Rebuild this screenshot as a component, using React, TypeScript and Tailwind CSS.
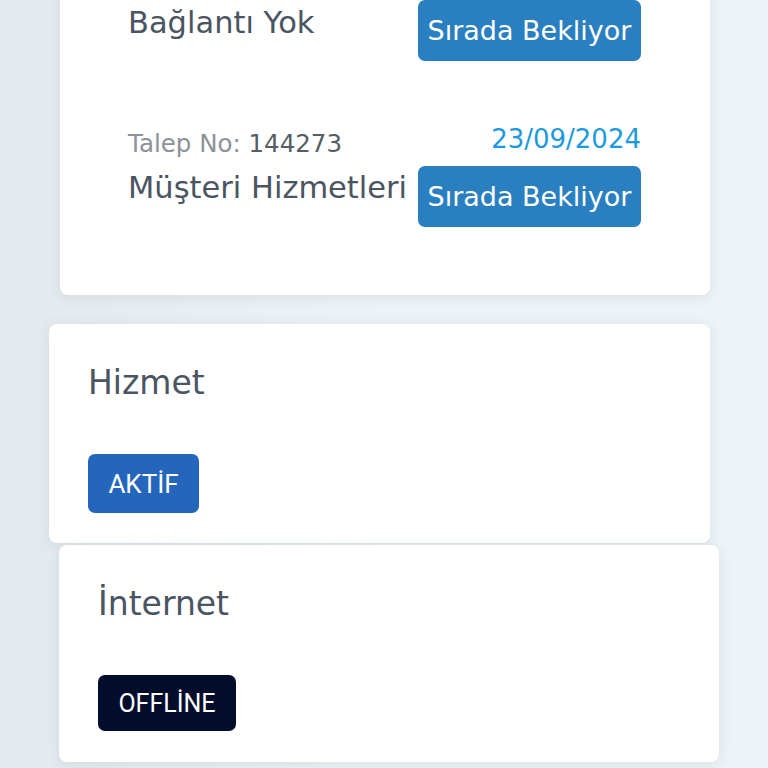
import React from "react";

const font = { fontFamily: '"DejaVu Sans", "Noto Sans", sans-serif' };
const roboto = { fontFamily: 'Roboto, "Noto Sans", sans-serif' };

function QueueButton() {
  return (
    <div className="flex h-[61px] w-[223px] shrink-0 items-center justify-center rounded-[7px] bg-[#2a7fc1] text-[27px] leading-none text-white">
      Sırada Bekliyor
    </div>
  );
}

export default function App() {
  return (
    <div
      className="relative h-[768px] w-[768px] overflow-hidden bg-gradient-to-r from-[#e3e9ed] via-[#edf3f6] to-[#edf3f6]"
      style={font}
    >
      <div className="flex flex-col">
        {/* Card 1 */}
        <div className="ml-[60px] -mt-[40px] w-[650px] rounded-[8px] bg-white pb-[68px] pl-[68px] pr-[69px] pt-[40px] shadow-[0_2px_12px_rgba(150,170,185,0.25)]">
          <div className="flex items-start justify-between">
            <div className="mt-[2.5px] text-[30.5px] leading-[40px] text-[#4a5561]">Bağlantı Yok</div>
            <QueueButton />
          </div>
          <div className="mt-[61px] flex h-[34px] items-start justify-between">
            <div className="mt-[4.5px] text-[24.5px] leading-[34px]">
              <span className="text-[#8c9298]">Talep No: </span>
              <span className="text-[#565d64]">144273</span>
            </div>
            <div className="text-[26px] leading-[34px] text-[#1b9ae0]">23/09/2024</div>
          </div>
          <div className="mt-[10px] flex items-start justify-between">
            <div className="mt-[1.5px] text-[30.5px] leading-[40px] text-[#4a5561]">Müşteri Hizmetleri</div>
            <QueueButton />
          </div>
        </div>

        {/* Card 2 */}
        <div className="ml-[49px] mt-[29px] h-[219px] w-[661px] rounded-[8px] bg-white pl-[39px] pt-[37px] shadow-[0_2px_12px_rgba(150,170,185,0.25)]">
          <div className="text-[33px] leading-[44px] text-[#4a5561]">Hizmet</div>
          <div
            className="mt-[49px] flex h-[59px] w-[111px] items-center justify-center rounded-[7px] bg-[#2566bd] text-[26px] leading-none text-white"
            style={roboto}
          >
            AKTİF
          </div>
        </div>

        {/* Card 3 */}
        <div className="ml-[59px] mt-[2px] h-[217px] w-[660px] rounded-[8px] bg-white pl-[39px] pt-[37px] shadow-[0_2px_12px_rgba(150,170,185,0.25)]">
          <div className="text-[33px] leading-[44px] text-[#4a5561]">İnternet</div>
          <div
            className="mt-[49px] flex h-[56px] w-[138px] items-center justify-center rounded-[7px] bg-[#020c2b] text-[25px] leading-none text-white"
            style={roboto}
          >
            OFFLİNE
          </div>
        </div>
      </div>
    </div>
  );
}
